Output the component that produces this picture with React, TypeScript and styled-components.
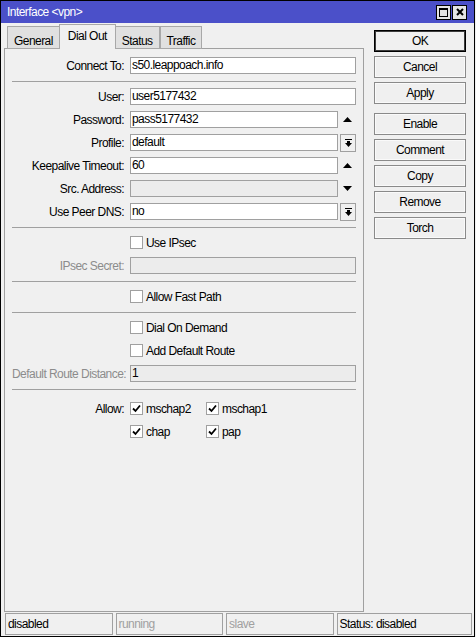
import React from 'react';
import styled, { createGlobalStyle } from 'styled-components';

const GlobalStyle = createGlobalStyle`
    html, body {
        margin: 0;
        padding: 0;
        background: #f0f0f0;
    }
    body {
        font-family: "Liberation Sans", Arial, sans-serif;
        font-size: 12px;
        letter-spacing: -0.55px;
        color: #000;
    }
    * {
        box-sizing: border-box;
    }
`;

const Window = styled.div`
    width: 475px;
    height: 637px;
    border: 1px solid #000;
    display: flex;
    flex-direction: column;
    background: #f0f0f0;
`;

const TitleBar = styled.div`
    height: 22px;
    background: #4b50c9;
    color: #fff;
    display: flex;
    align-items: center;
    padding: 0 6px;
`;

const Title = styled.span`
    flex: 1;
`;

const TitleButton = styled.div`
    width: 15px;
    height: 15px;
    margin-left: 1px;
    background: #e4e4e4;
    border: 1px solid #000;
    display: flex;
    align-items: center;
    justify-content: center;
    &:last-child {
        margin-right: 1px;
    }
`;

const Main = styled.div`
    flex: 1;
    display: flex;
    padding: 3px 0 1px 3px;
    min-height: 0;
`;

const LeftColumn = styled.div`
    width: 360px;
    display: flex;
    flex-direction: column;
`;

const Tabs = styled.div`
    height: 23px;
    display: flex;
    align-items: flex-end;
    padding-left: 3px;
`;

const Tab = styled.div<{ $active?: boolean }>`
    height: ${(p) => (p.$active ? '25px' : '23px')};
    margin: 0 ${(p) => (p.$active ? '-1px' : '0')};
    padding: ${(p) => (p.$active ? '4px 8px 0' : '7px 6px 0')};
    background: ${(p) => (p.$active ? '#f0f0f0' : '#e0e0e0')};
    border: 1px solid #a8a8a8;
    border-bottom: ${(p) => (p.$active ? 'none' : '1px solid #a8a8a8')};
    position: relative;
    z-index: ${(p) => (p.$active ? 2 : 1)};
    line-height: 15px;
    white-space: nowrap;
    & + & {
        border-left: ${(p) => (p.$active ? '1px solid #a8a8a8' : 'none')};
    }
`;

const Panel = styled.div`
    flex: 1;
    border: 1px solid #a0a0a0;
    margin-top: -1px;
    padding: 8px 7px 0 7px;
    display: flex;
    flex-direction: column;
`;

const Section = styled.div<{ $top?: number }>`
    display: flex;
    flex-direction: column;
    gap: 6px;
    padding-top: ${(p) => p.$top ?? 6}px;
    padding-bottom: 7px;
`;

const Separator = styled.div`
    height: 1px;
    background: #a0a0a0;
`;

const FormRow = styled.div`
    height: 17px;
    display: flex;
    align-items: center;
`;

const Label = styled.div<{ $disabled?: boolean }>`
    width: 112px;
    margin-right: 6px;
    text-align: right;
    white-space: nowrap;
    color: ${(p) => (p.$disabled ? '#8c8c8c' : '#000')};
`;

const Field = styled.div<{ $disabled?: boolean }>`
    flex: 1;
    height: 17px;
    border: 1px solid #a0a0a0;
    background: ${(p) => (p.$disabled ? '#ececec' : '#fff')};
    padding-left: 1px;
    line-height: 15px;
    white-space: nowrap;
    overflow: hidden;
`;

const Widget = styled.div`
    width: 18px;
    height: 17px;
    display: flex;
    align-items: center;
    justify-content: center;
    padding-left: 1px;
`;

const DropButton = styled.div`
    width: 17px;
    height: 18px;
    margin-left: 1px;
    border: 1px solid #a0a0a0;
    background: #f0f0f0;
    display: flex;
    align-items: center;
    justify-content: center;
`;

const CheckRow = styled.div`
    height: 17px;
    display: flex;
    align-items: center;
    padding-left: 118px;
`;

const CheckItem = styled.div`
    display: flex;
    align-items: center;
    width: 76px;
`;

const Box = styled.div`
    width: 13px;
    height: 13px;
    border: 1px solid #a0a0a0;
    background: #fff;
    margin-right: 3px;
    display: flex;
    align-items: center;
    justify-content: center;
`;

const AllowRow = styled.div`
    height: 17px;
    display: flex;
    align-items: center;
`;

const ButtonColumn = styled.div`
    width: 92px;
    margin-left: 10px;
    padding-top: 4px;
    display: flex;
    flex-direction: column;
    gap: 4px;
`;

const Button = styled.div<{ $default?: boolean; $gap?: number }>`
    height: 22px;
    margin-top: ${(p) => p.$gap ?? 0}px;
    border: ${(p) => (p.$default ? '1px solid #000' : '1px solid #8a8a8a')};
    box-shadow: ${(p) => (p.$default ? 'inset 0 0 0 1px #3c3c3c' : 'inset 0 0 0 1px #fafafa')};
    background: #f0f0f0;
    display: flex;
    align-items: center;
    justify-content: center;
`;

const StatusBar = styled.div`
    height: 23px;
    display: flex;
    gap: 3px;
    padding: 0 2px 1px 4px;
`;

const StatusCell = styled.div<{ $width: number; $muted?: boolean }>`
    width: ${(p) => p.$width}px;
    border: 1px solid #a0a0a0;
    padding: 0 2px;
    display: flex;
    align-items: center;
    color: ${(p) => (p.$muted ? '#a0a0a0' : '#000')};
`;

const UpArrow = () => (
    <svg width="9" height="5" viewBox="0 0 9 5">
        <polygon points="0,5 4.5,0 9,5" fill="#000" />
    </svg>
);

const DownArrow = () => (
    <svg width="9" height="5" viewBox="0 0 9 5">
        <polygon points="0,0 9,0 4.5,5" fill="#000" />
    </svg>
);

const DropIcon = () => (
    <DropButton>
        <svg width="7" height="8" viewBox="0 0 7 8">
            <rect x="0" y="0" width="7" height="1" fill="#000" />
            <rect x="2" y="2" width="3" height="2" fill="#000" />
            <polygon points="0,4 7,4 3.5,8" fill="#000" />
        </svg>
    </DropButton>
);

const Check = ({ checked }: { checked?: boolean }) => (
    <Box>
        {checked && (
            <svg width="9" height="9" viewBox="0 0 9 9">
                <path d="M1 4.5 L3.5 7 L8 1.5" stroke="#000" strokeWidth="1.8" fill="none" />
            </svg>
        )}
    </Box>
);

interface IRowProps {
    label: string;
    value?: string;
    disabled?: boolean;
    dimLabel?: boolean;
    widget?: React.ReactNode;
}

const Row = ({ label, value, disabled, dimLabel, widget }: IRowProps) => (
    <FormRow>
        <Label $disabled={dimLabel}>{label}</Label>
        <Field $disabled={disabled}>{value}</Field>
        {widget && <Widget>{widget}</Widget>}
    </FormRow>
);

const CheckLine = ({ label, checked }: { label: string; checked?: boolean }) => (
    <CheckRow>
        <Check checked={checked} />
        {label}
    </CheckRow>
);

export default function App() {
    return (
        <>
            <GlobalStyle />
            <Window>
                <TitleBar>
                    <Title>Interface &lt;vpn&gt;</Title>
                    <TitleButton>
                        <svg width="9" height="9" viewBox="0 0 9 9">
                            <rect x="0.5" y="0.5" width="8" height="8" fill="none" stroke="#000" />
                            <rect x="0" y="0" width="9" height="2" fill="#000" />
                        </svg>
                    </TitleButton>
                    <TitleButton>
                        <svg width="8" height="8" viewBox="0 0 8 8">
                            <path d="M1 1 L7 7 M7 1 L1 7" stroke="#000" strokeWidth="2" />
                        </svg>
                    </TitleButton>
                </TitleBar>
                <Main>
                    <LeftColumn>
                        <Tabs>
                            <Tab>General</Tab>
                            <Tab $active>Dial Out</Tab>
                            <Tab>Status</Tab>
                            <Tab>Traffic</Tab>
                        </Tabs>
                        <Panel>
                            <Section $top={0}>
                                <Row label="Connect To:" value="s50.leappoach.info" />
                            </Section>
                            <Separator />
                            <Section>
                                <Row label="User:" value="user5177432" />
                                <Row label="Password:" value="pass5177432" widget={<UpArrow />} />
                                <Row label="Profile:" value="default" widget={<DropIcon />} />
                                <Row label="Keepalive Timeout:" value="60" widget={<UpArrow />} />
                                <Row label="Src. Address:" disabled widget={<DownArrow />} />
                                <Row label="Use Peer DNS:" value="no" widget={<DropIcon />} />
                            </Section>
                            <Separator />
                            <Section>
                                <CheckLine label="Use IPsec" />
                                <Row label="IPsec Secret:" disabled dimLabel />
                            </Section>
                            <Separator />
                            <Section>
                                <CheckLine label="Allow Fast Path" />
                            </Section>
                            <Separator />
                            <Section>
                                <CheckLine label="Dial On Demand" />
                                <CheckLine label="Add Default Route" />
                                <Row label="Default Route Distance:" value="1" disabled dimLabel />
                            </Section>
                            <Separator />
                            <Section $top={10}>
                                <AllowRow>
                                    <Label>Allow:</Label>
                                    <CheckItem>
                                        <Check checked />
                                        mschap2
                                    </CheckItem>
                                    <CheckItem>
                                        <Check checked />
                                        mschap1
                                    </CheckItem>
                                </AllowRow>
                                <CheckRow>
                                    <CheckItem>
                                        <Check checked />
                                        chap
                                    </CheckItem>
                                    <CheckItem>
                                        <Check checked />
                                        pap
                                    </CheckItem>
                                </CheckRow>
                            </Section>
                        </Panel>
                    </LeftColumn>
                    <ButtonColumn>
                        <Button $default>OK</Button>
                        <Button>Cancel</Button>
                        <Button>Apply</Button>
                        <Button $gap={5}>Enable</Button>
                        <Button>Comment</Button>
                        <Button>Copy</Button>
                        <Button>Remove</Button>
                        <Button>Torch</Button>
                    </ButtonColumn>
                </Main>
                <StatusBar>
                    <StatusCell $width={108}>disabled</StatusCell>
                    <StatusCell $width={108} $muted>
                        running
                    </StatusCell>
                    <StatusCell $width={108} $muted>
                        slave
                    </StatusCell>
                    <StatusCell $width={136}>Status: disabled</StatusCell>
                </StatusBar>
            </Window>
        </>
    );
}
